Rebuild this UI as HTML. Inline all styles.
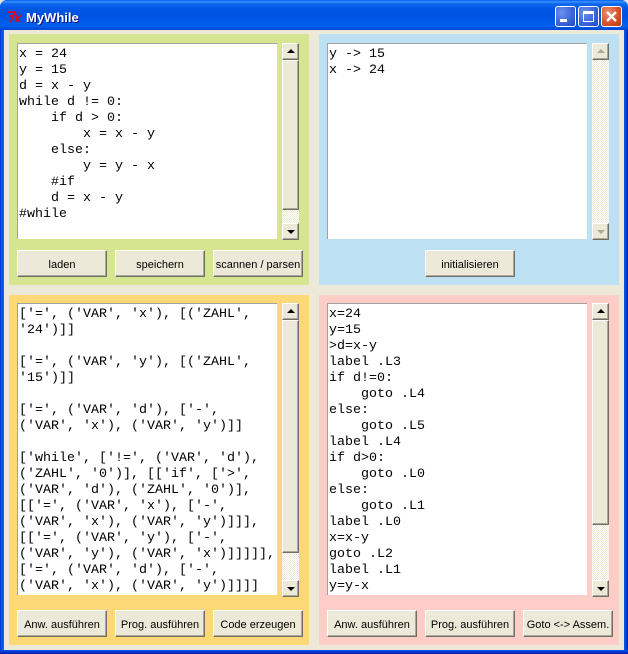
<!DOCTYPE html>
<html><head><meta charset="utf-8"><style>
html,body{margin:0;padding:0;width:628px;height:654px;overflow:hidden;background:#ECE9D8}
*{box-sizing:border-box}
div{position:absolute}
#frame{left:0;top:0;width:628px;height:654px;background:#0831D9;border-radius:7px 7px 0 0;overflow:hidden}
#title{left:0;top:0;width:628px;height:30px;background:linear-gradient(180deg,#0058EE 0,#3A93FF 6%,#0F6AF0 12%,#0055E5 30%,#0054E3 60%,#0060F0 85%,#0055E5 92%,#0043CF 100%)}
#title span{position:absolute;left:26px;top:11px;font:bold 13px/14px "Liberation Sans",sans-serif;color:#fff;text-shadow:1px 1px 0 #0F1089}
#lb{left:0;top:30px;width:4px;height:624px;background:linear-gradient(90deg,#0831D9,#0855DD,#0855DD,#166AEE)}
#rb{left:624px;top:30px;width:4px;height:624px;background:linear-gradient(90deg,#0855DD,#0855DD,#0831D9,#001EA0)}
#bb{left:0;top:650px;width:628px;height:4px;background:linear-gradient(180deg,#0855DD,#0831D9,#001EA0)}
#client{left:4px;top:30px;width:620px;height:620px;background:#ECE9D8}
.wb{top:6px;width:21px;height:21px;border:1px solid #fff;border-radius:3px}
.blue{background:radial-gradient(circle at 30% 30%,#6B93F0,#3C66DC 55%,#2346C4)}
.red{background:radial-gradient(circle at 30% 30%,#EE9270,#D9512E 55%,#B93A17)}
.p{width:300px;height:251px}
.box{width:260px;background:#fff;border-top:1px solid #A0A0A0;border-left:1px solid #A0A0A0;font:13.33px/16px "Liberation Mono",monospace;color:#000;white-space:pre;overflow:hidden;padding:3px 0 0 1px}
.sb{width:17px;background-color:#F4F2E8;background-image:conic-gradient(#ECE9D8 25%,#fff 0 50%,#ECE9D8 0 75%,#fff 0);background-size:2px 2px}
.ar,.th,.bt{background:#ECE9D8;border:1px solid;border-color:#fff #716F64 #716F64 #fff}
.ar,.th{left:0;width:17px;box-shadow:inset -1px -1px 0 #ACA899}
.ar{height:17px}
.ar i{position:absolute;left:4px;width:0;height:0;border-left:4px solid transparent;border-right:4px solid transparent}
.u i{top:5px;border-bottom:4px solid #000}
.d i{top:6px;border-top:4px solid #000}
.dis.u i{border-bottom-color:#ACA899}
.dis.d i{border-top-color:#ACA899}
.bt{height:27px;font:11px/28px "Liberation Sans",sans-serif;color:#000;text-align:center;white-space:nowrap;box-shadow:inset -1px -1px 0 #ACA899}
</style></head><body>
<div id="frame">
<div id="title"><span>MyWhile</span></div>
<svg style="position:absolute;left:7px;top:11px" width="16" height="12" viewBox="0 0 16 12"><path d="M1 1.2H8.2L3.5 11M3 5H7" fill="none" stroke="#F00000" stroke-width="1.7"/><path d="M10.8 1L8.8 11M14.5 4L10 7.5L13 11" fill="none" stroke="#F00000" stroke-width="1.4"/></svg>
<div class="wb blue" style="left:555px"><div style="left:4px;top:12px;width:7px;height:3px;background:#fff"></div></div>
<div class="wb blue" style="left:578px"><div style="left:4px;top:4px;width:11px;height:11px;border:1px solid #fff;border-top:3px solid #fff"></div></div>
<div class="wb red" style="left:601px"><svg style="position:absolute;left:3px;top:3px" width="13" height="13" viewBox="0 0 13 13"><path d="M2 2L11 11M11 2L2 11" stroke="#fff" stroke-width="2.4" fill="none"/></svg></div>
<div id="lb"></div><div id="rb"></div><div id="bb"></div>
<div id="client"></div>

<!-- green -->
<div class="p" style="left:9px;top:34px;background:#D6E690"></div>
<div class="box" style="left:17px;top:43px;height:196px">x = 24
y = 15
d = x - y
while d != 0:
    if d &gt; 0:
        x = x - y
    else:
        y = y - x
    #if
    d = x - y
#while</div>
<div class="sb" style="left:282px;top:43px;height:197px">
<div class="ar u" style="top:0"><i></i></div>
<div class="th" style="top:17px;height:150px"></div>
<div class="ar d" style="top:180px"><i></i></div></div>
<div class="bt" style="left:17px;top:250px;width:90px">laden</div>
<div class="bt" style="left:115px;top:250px;width:90px">speichern</div>
<div class="bt" style="left:213px;top:250px;width:90px">scannen / parsen</div>

<!-- blue -->
<div class="p" style="left:319px;top:34px;background:#BDE1F3"></div>
<div class="box" style="left:327px;top:43px;height:196px">y -&gt; 15
x -&gt; 24</div>
<div class="sb" style="left:592px;top:43px;height:197px">
<div class="ar u dis" style="top:0"><i></i></div>
<div class="ar d dis" style="top:180px"><i></i></div></div>
<div class="bt" style="left:425px;top:250px;width:90px">initialisieren</div>

<!-- orange -->
<div class="p" style="left:9px;top:295px;height:350px;background:#FCD877"></div>
<div class="box" style="left:17px;top:303px;height:292px">['=', ('VAR', 'x'), [('ZAHL',
'24')]]

['=', ('VAR', 'y'), [('ZAHL',
'15')]]

['=', ('VAR', 'd'), ['-',
('VAR', 'x'), ('VAR', 'y')]]

['while', ['!=', ('VAR', 'd'),
('ZAHL', '0')], [['if', ['&gt;',
('VAR', 'd'), ('ZAHL', '0')],
[['=', ('VAR', 'x'), ['-',
('VAR', 'x'), ('VAR', 'y')]]],
[['=', ('VAR', 'y'), ['-',
('VAR', 'y'), ('VAR', 'x')]]]]],
['=', ('VAR', 'd'), ['-',
('VAR', 'x'), ('VAR', 'y')]]]]</div>
<div class="sb" style="left:282px;top:303px;height:294px">
<div class="ar u" style="top:0"><i></i></div>
<div class="th" style="top:17px;height:233px"></div>
<div class="ar d" style="top:277px"><i></i></div></div>
<div class="bt" style="left:17px;top:610px;width:90px">Anw. ausführen</div>
<div class="bt" style="left:115px;top:610px;width:90px">Prog. ausführen</div>
<div class="bt" style="left:213px;top:610px;width:90px">Code erzeugen</div>

<!-- pink -->
<div class="p" style="left:319px;top:295px;height:350px;background:#FFCDC8"></div>
<div class="box" style="left:327px;top:303px;height:292px">x=24
y=15
&gt;d=x-y
label .L3
if d!=0:
    goto .L4
else:
    goto .L5
label .L4
if d&gt;0:
    goto .L0
else:
    goto .L1
label .L0
x=x-y
goto .L2
label .L1
y=y-x</div>
<div class="sb" style="left:592px;top:303px;height:294px">
<div class="ar u" style="top:0"><i></i></div>
<div class="th" style="top:17px;height:205px"></div>
<div class="ar d" style="top:277px"><i></i></div></div>
<div class="bt" style="left:327px;top:610px;width:90px">Anw. ausführen</div>
<div class="bt" style="left:425px;top:610px;width:90px">Prog. ausführen</div>
<div class="bt" style="left:523px;top:610px;width:90px">Goto &lt;-&gt; Assem.</div>
</div>
</body></html>
